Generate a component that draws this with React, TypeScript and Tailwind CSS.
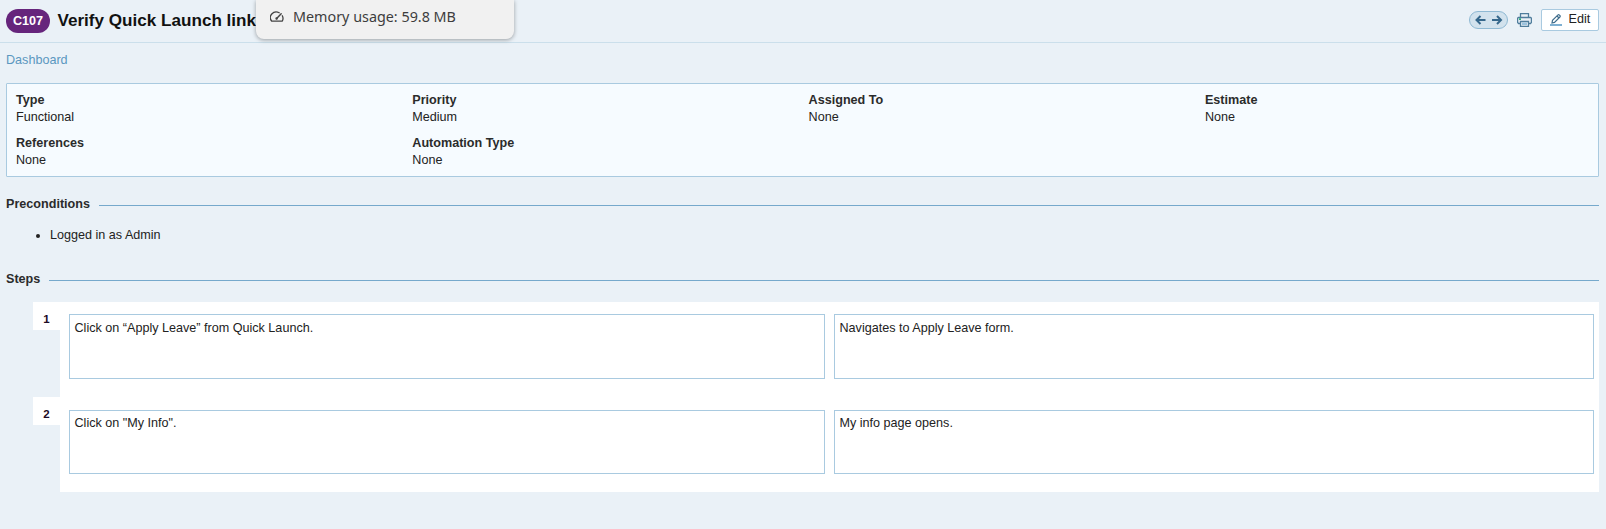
import React from "react";

const details = [
  { label: "Type", value: "Functional" },
  { label: "Priority", value: "Medium" },
  { label: "Assigned To", value: "None" },
  { label: "Estimate", value: "None" },
  { label: "References", value: "None" },
  { label: "Automation Type", value: "None" },
];

const steps = [
  {
    action: "Click on “Apply Leave” from Quick Launch.",
    expected: "Navigates to Apply Leave form.",
    row: "h-[95px] pt-3",
    box: "h-[65px] pt-[5px]",
  },
  {
    action: 'Click on "My Info".',
    expected: "My info page opens.",
    row: "h-[95px] pt-[13px]",
    box: "h-16 pt-1",
  },
];

function GaugeIcon() {
  return (
    <svg width="14" height="12" viewBox="0 0 14 12" fill="none" stroke="#444" strokeWidth="1.3" strokeLinecap="round">
      <path d="M9.2 1.7A5.9 5.6 0 0 0 1.8 10.2H12.2A5.9 5.6 0 0 0 12.3 4.8" strokeLinejoin="round" />
      <path d="M6.6 7.6L11.2 2.8" strokeWidth="1.4" />
      <circle cx="6.6" cy="7.6" r="0.6" fill="#444" />
    </svg>
  );
}

function PrinterIcon() {
  return (
    <svg width="15" height="14" viewBox="0 0 15 14" fill="none" stroke="#4f7d9c" strokeWidth="1.3">
      <path d="M3.5 4V0.6H11.5V4" />
      <path d="M3.5 10.5H1.5L0.6 9.5V5.2L1.5 4.5H13.5L14.4 5.2V9.5L13.5 10.5H11.5" />
      <path d="M3.5 8.5H11.5V13.4H3.5Z" fill="#eaf1f7" />
      <path d="M5 9.5H10V12H5Z" fill="#9cc3de" stroke="none" />
      <path d="M2 5.2H4V7H2Z" fill="#2fae7d" stroke="none" />
    </svg>
  );
}

function PencilIcon() {
  return (
    <svg width="12" height="12" viewBox="0 0 12 12" fill="none">
      <path d="M2 9L2.5 6.3L8 0.9Q8.7 0.4 9.4 1.1L10 1.7Q10.5 2.4 9.9 3L4.5 8.4ZM7 2L9 4" stroke="#3f6d8c" strokeWidth="1.2" />
      <path d="M0 11H12" stroke="#7fb0d2" strokeWidth="2" />
    </svg>
  );
}

function SectionTitle({ children }: { children: React.ReactNode }) {
  return (
    <div className="flex h-4 items-center gap-[9px]">
      <h2 className="text-[12.6px] leading-4 font-bold text-[#2b2b2b]">{children}</h2>
      <div className="mt-[3px] h-px flex-1 bg-[#76a9cc]" />
    </div>
  );
}

export default function App() {
  return (
    <div className="relative h-[529px] w-full overflow-hidden bg-[#eaf1f7] font-['Liberation_Sans',Arial,sans-serif] text-[12.6px] leading-4 text-[#222]">
      <header className="flex h-[43px] items-start border-b border-[#cbdfeb] pr-[7px] pl-1.5">
        <span className="mt-[9px] flex h-6 w-11 items-center justify-center rounded-full bg-[#66257c] pb-px text-[12.6px] font-bold text-white">
          C107
        </span>
        <h1 className="mt-[10px] ml-[7.5px] text-[17.1px] leading-[22px] font-bold text-[#111]">Verify Quick Launch link</h1>
        <div className="ml-auto flex">
          <div className="mt-[11px] flex h-[18px] w-[39px] items-center justify-center rounded-full border border-[#8fb9d3] bg-[#d2e2ed]">
            <svg width="28" height="10" viewBox="0 0 28 10" fill="none" stroke="#35678b" strokeWidth="2">
              <path d="M10.5 5H2M5.5 1L1.5 5L5.5 9M17 5H26M22 1L26 5L22 9" />
            </svg>
          </div>
          <div className="mt-[13px] ml-[9px]">
            <PrinterIcon />
          </div>
          <button className="mt-[9px] ml-[9px] flex h-[22px] w-[58px] items-start rounded-[2px] border border-[#a9cae0] bg-white pl-2">
            <span className="mt-1">
              <PencilIcon />
            </span>
            <span className="mt-px ml-[6.5px] leading-4">Edit</span>
          </button>
        </div>
      </header>

      <nav className="mt-[9px] ml-1.5 h-4 text-[#5b97c0]">Dashboard</nav>

      <section className="mt-[15px] mr-[7px] ml-1.5 grid h-[94px] grid-cols-[repeat(4,396.3px)] content-start gap-y-[9px] rounded-[1px] border border-[#a9cae0] bg-[#f6fbff] pt-2 pl-[9px]">
        {details.map((item) => (
          <div key={item.label} className="leading-[17px]">
            <div className="font-bold text-[#2b2b2b]">{item.label}</div>
            <div>{item.value}</div>
          </div>
        ))}
      </section>

      <section className="mt-[19px] mr-[7px] ml-1.5">
        <SectionTitle>Preconditions</SectionTitle>
        <ul className="mt-[15px] list-disc pl-11">
          <li>Logged in as Admin</li>
        </ul>
      </section>

      <section className="mt-7 mr-[7px] ml-1.5">
        <SectionTitle>Steps</SectionTitle>
        <div className="mt-[15px] ml-[27px]">
          {steps.map((step, index) => (
            <div key={step.action} className="flex">
              <div className="flex h-7 w-[27px] items-center justify-center bg-white pt-1.5 text-[11.5px] font-bold text-[#1c0a24]">
                {index + 1}
              </div>
              <div className={"flex flex-1 gap-[9px] bg-white pr-[5px] pl-[9px] " + step.row}>
                <div className={"w-[756px] border border-[#a9cae0] px-[4.5px] " + step.box}>{step.action}</div>
                <div className={"flex-1 border border-[#a9cae0] px-[4.5px] " + step.box}>{step.expected}</div>
              </div>
            </div>
          ))}
        </div>
      </section>

      <div className="absolute top-0 left-64 flex h-[39px] w-[258px] items-start rounded-b-lg bg-[#f1f1f1] pl-3.5 font-['Noto_Sans','Open_Sans',sans-serif] text-[14.35px] text-[#3d3d3d] shadow-[0_1px_4px_rgba(0,0,0,0.35)]">
        <span className="mt-[11px]">
          <GaugeIcon />
        </span>
        <span className="mt-[7px] ml-[9px] leading-5 whitespace-nowrap">Memory usage: 59.8 MB</span>
      </div>
    </div>
  );
}
